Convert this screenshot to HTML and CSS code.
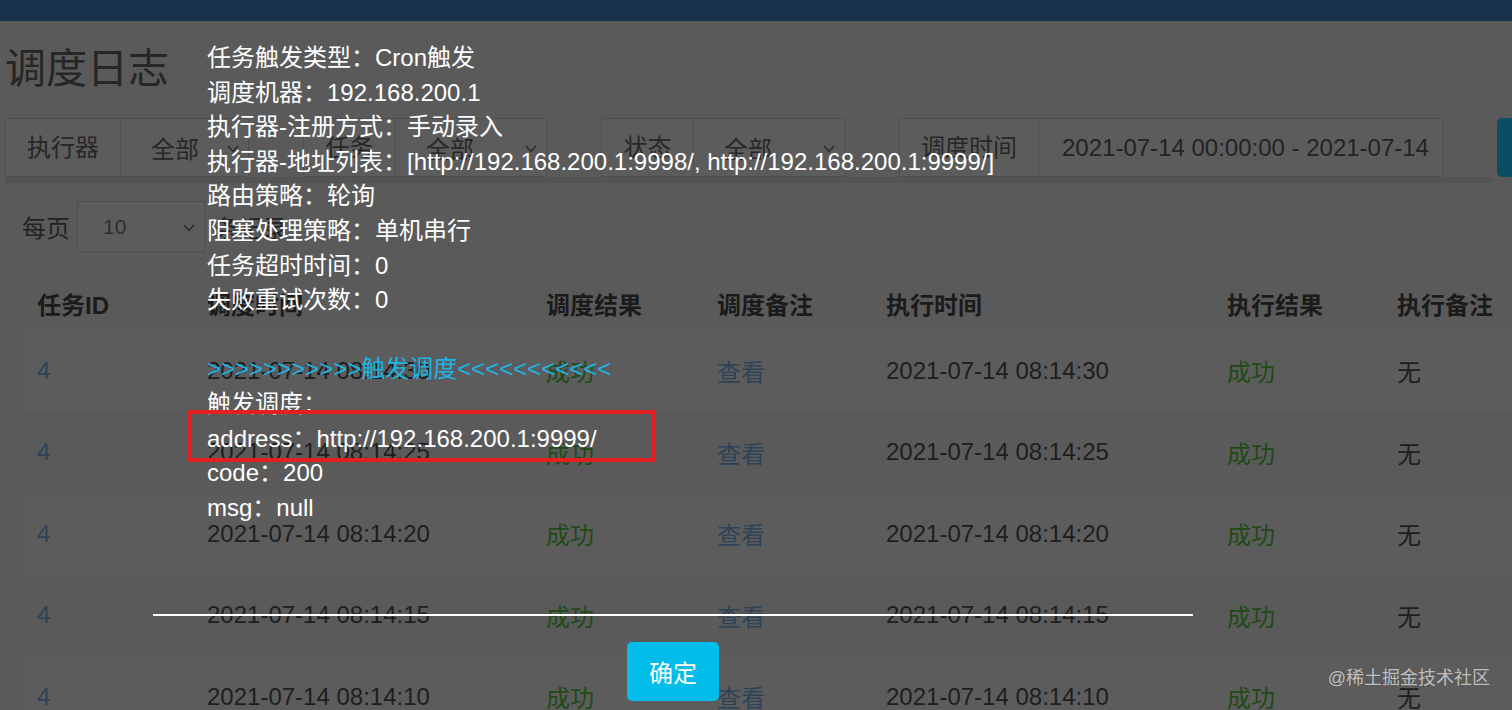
FILE: index.html
```html
<!DOCTYPE html>
<html lang="zh-CN">
<head>
    <meta charset="UTF-8">
    <meta name="viewport" content="width=device-width, initial-scale=1.0">
    <link rel="stylesheet" href="styles.css">
    <title>调度日志</title>
</head>
<body>
    <header class="main-header"></header>

    <div class="content">
        <h1 class="page-title">调度日志</h1>

        <div class="filter-row">
            <div class="input-group">
                <span class="addon addon-sm">执行器</span>
                <div class="select">全部
                    <svg class="chevron" width="12" height="8" viewBox="0 0 12 8"><polyline points="1,1 6,6.5 11,1" fill="none" stroke="#2a2a2a" stroke-width="1.4"/></svg>
                </div>
            </div>
            <div class="input-group">
                <span class="addon">任务</span>
                <div class="select">全部
                    <svg class="chevron" width="12" height="8" viewBox="0 0 12 8"><polyline points="1,1 6,6.5 11,1" fill="none" stroke="#2a2a2a" stroke-width="1.4"/></svg>
                </div>
            </div>
            <div class="input-group">
                <span class="addon">状态</span>
                <div class="select">全部
                    <svg class="chevron" width="12" height="8" viewBox="0 0 12 8"><polyline points="1,1 6,6.5 11,1" fill="none" stroke="#2a2a2a" stroke-width="1.4"/></svg>
                </div>
            </div>
            <div class="input-group input-group-lg">
                <span class="addon addon-lg">调度时间</span>
                <input class="date-range" type="text" value="2021-07-14 00:00:00 - 2021-07-14 23:59:59" readonly>
            </div>
            <button class="btn-search">搜索</button>
        </div>

        <div class="log-box">
            <div class="length-row">
                <span>每页</span>
                <div class="select select-length">10
                    <svg class="chevron" width="12" height="8" viewBox="0 0 12 8"><polyline points="1,1 6,6.5 11,1" fill="none" stroke="#2a2a2a" stroke-width="1.4"/></svg>
                </div>
                <span>条记录</span>
            </div>

            <table class="log-table">
                <colgroup>
                    <col style="width:170px"><col style="width:339px"><col style="width:171px"><col style="width:169px">
                    <col style="width:341px"><col style="width:170px"><col style="width:130px">
                </colgroup>
                <thead>
                    <tr><th>任务ID</th><th>调度时间</th><th>调度结果</th><th>调度备注</th><th>执行时间</th><th>执行结果</th><th>执行备注</th></tr>
                </thead>
                <tbody>
                    <tr><td class="link">4</td><td>2021-07-14 08:14:30</td><td class="ok">成功</td><td class="link">查看</td><td>2021-07-14 08:14:30</td><td class="ok">成功</td><td>无</td></tr>
                    <tr><td class="link">4</td><td>2021-07-14 08:14:25</td><td class="ok">成功</td><td class="link">查看</td><td>2021-07-14 08:14:25</td><td class="ok">成功</td><td>无</td></tr>
                    <tr><td class="link">4</td><td>2021-07-14 08:14:20</td><td class="ok">成功</td><td class="link">查看</td><td>2021-07-14 08:14:20</td><td class="ok">成功</td><td>无</td></tr>
                    <tr><td class="link">4</td><td>2021-07-14 08:14:15</td><td class="ok">成功</td><td class="link">查看</td><td>2021-07-14 08:14:15</td><td class="ok">成功</td><td>无</td></tr>
                    <tr><td class="link">4</td><td>2021-07-14 08:14:10</td><td class="ok">成功</td><td class="link">查看</td><td>2021-07-14 08:14:10</td><td class="ok">成功</td><td>无</td></tr>
                </tbody>
            </table>
        </div>
    </div>

    <!-- layer dialog with the trigger log -->
    <div class="layer-dialog">
        <div class="layer-content">
            任务触发类型：Cron触发<br>
            调度机器：192.168.200.1<br>
            执行器-注册方式：手动录入<br>
            执行器-地址列表：[http://192.168.200.1:9998/, http://192.168.200.1:9999/]<br>
            路由策略：轮询<br>
            阻塞处理策略：单机串行<br>
            任务超时时间：0<br>
            失败重试次数：0<br>
            <br>
            <span class="trigger-title">&gt;&gt;&gt;&gt;&gt;&gt;&gt;&gt;&gt;&gt;&gt;触发调度&lt;&lt;&lt;&lt;&lt;&lt;&lt;&lt;&lt;&lt;&lt;</span><br>
            触发调度：<br>
            address：http://192.168.200.1:9999/<br>
            code：200<br>
            msg：null
        </div>
        <div class="layer-btns">
            <button class="btn-ok">确定</button>
        </div>
        <div class="mark-box"></div>
    </div>

    <div class="watermark">@稀土掘金技术社区</div>
</body>
</html>
```

FILE: styles.css
```css
* {
    box-sizing: border-box;
}

body {
    margin: 0;
    height: 710px;
    overflow: hidden;
    position: relative;
    background: #5a5a5a;
    color: #202020;
    font-family: "Liberation Sans", "Noto Sans CJK SC", sans-serif;
    font-size: 24px;
}

.main-header {
    height: 21px;
    background: #17324a;
}

.content {
    padding-left: 5px;
}

.page-title {
    margin: 23px 0 0;
    font-size: 41px;
    font-weight: normal;
    line-height: 50px;
    color: #262626;
}

/* search bar */
.filter-row {
    display: flex;
    gap: 54px;
    width: 1488px;
    margin-top: 24px;
    border-bottom: 6px solid #545454;
}

.input-group {
    display: flex;
    flex-shrink: 0;
    width: 244px;
    height: 59px;
    border: 1px solid #4f4f4f;
    background: #5c5c5c;
}

.input-group-lg {
    width: 544px;
}

.addon {
    flex-shrink: 0;
    width: 92px;
    line-height: 57px;
    text-align: center;
    border-right: 1px solid #4f4f4f;
    color: #272727;
}

.addon-sm {
    width: 115px;
}

.addon-lg {
    width: 139px;
}

.select {
    position: relative;
    flex: 1;
    display: flex;
    align-items: center;
    padding-left: 30px;
    color: #272727;
}

.chevron {
    position: absolute;
    right: 9px;
    top: 50%;
    margin-top: -3px;
}

.date-range {
    width: 404px;
    border: none;
    background: transparent;
    padding: 0 10px 0 23px;
    font-family: inherit;
    font-size: 24px;
    color: #232323;
    outline: none;
}

.btn-search {
    flex-shrink: 0;
    width: 110px;
    height: 59px;
    border: none;
    border-radius: 5px;
    background: #0b4d63;
    color: #5a8898;
    font-family: inherit;
    font-size: 24px;
}

/* table box */
.log-box {
    padding-left: 17px;
}

.length-row {
    display: flex;
    align-items: center;
    margin-top: 18px;
    height: 51px;
    color: #232323;
}

.select-length {
    flex: none;
    width: 128px;
    height: 51px;
    margin: 0 10px 0 7px;
    padding-left: 25px;
    border: 1px solid #4f4f4f;
    background: #5c5c5c;
    font-size: 21px;
    color: #2e2e2e;
}

.log-table {
    margin-top: 24px;
    width: 1490px;
    table-layout: fixed;
    border-collapse: collapse;
}

.log-table th {
    height: 54px;
    padding: 0 15px;
    text-align: left;
    font-weight: bold;
    color: #1b1b1b;
    white-space: nowrap;
}

.log-table td {
    height: 81.5px;
    padding: 0 15px;
    color: #1e1e1e;
    white-space: nowrap;
}

.log-table tbody tr:nth-child(odd) {
    background: #5c5c5c;
}

.log-table .link {
    color: #2e4357;
}

.log-table .ok {
    color: #1f4a16;
}

/* layer dialog */
.layer-dialog {
    position: absolute;
    left: 153px;
    top: 41px;
    width: 1040px;
}

.layer-content {
    height: 573px;
    padding-left: 54px;
    color: #fff;
    font-size: 24px;
    line-height: 34.6px;
    white-space: nowrap;
}

.trigger-title {
    color: #1db5e3;
}

.layer-btns {
    border-top: 2px solid #fff;
    padding-top: 26px;
    text-align: center;
}

.btn-ok {
    width: 92px;
    height: 59px;
    border: none;
    border-radius: 5px;
    background: #02bde9;
    color: #fff;
    font-family: inherit;
    font-size: 24px;
}

.mark-box {
    position: absolute;
    left: 34px;
    top: 369px;
    width: 468px;
    height: 52px;
    border: 4px solid #e3201f;
}

.watermark {
    position: absolute;
    right: 22px;
    bottom: 22px;
    font-size: 18px;
    line-height: 20px;
    color: rgba(255, 255, 255, 0.68);
    text-shadow: 0 0 1px rgba(0, 0, 0, 0.3);
}
```
